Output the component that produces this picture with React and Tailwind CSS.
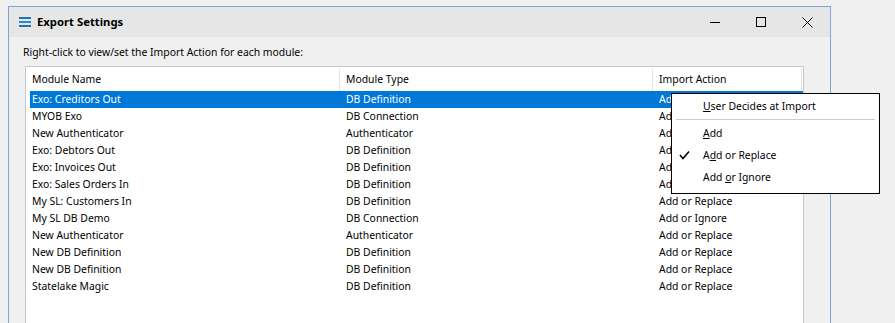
import React from 'react';

const rows = [
    ["Exo: Creditors Out", "DB Definition", "Add or Replace"],
    ["MYOB Exo", "DB Connection", "Add or Replace"],
    ["New Authenticator", "Authenticator", "Add or Replace"],
    ["Exo: Debtors Out", "DB Definition", "Add or Replace"],
    ["Exo: Invoices Out", "DB Definition", "Add or Replace"],
    ["Exo: Sales Orders In", "DB Definition", "Add or Replace"],
    ["My SL: Customers In", "DB Definition", "Add or Replace"],
    ["My SL DB Demo", "DB Connection", "Add or Ignore"],
    ["New Authenticator", "Authenticator", "Add or Replace"],
    ["New DB Definition", "DB Definition", "Add or Replace"],
    ["New DB Definition", "DB Definition", "Add or Replace"],
    ["Statelake Magic", "DB Definition", "Add or Replace"],
];

const MenuItem = ({ checked, children }) => (
    <div className="h-[22px] flex items-center relative">
        {checked && (
            <svg className="absolute left-[7px] top-[6px]" width="11" height="10" viewBox="0 0 11 10">
                <path d="M1 5 L4 8.5 L10 1.5" stroke="#000" strokeWidth="1.6" fill="none" />
            </svg>
        )}
        <span className="pl-[31px] pt-px">{children}</span>
    </div>
);

const App = () => {
    return (
        <div
            className="w-[895px] h-[323px] bg-[#f0f0f0] overflow-hidden pt-[6px] pl-[8px] relative text-[10.4px] text-black"
            style={{ fontFamily: '"Noto Sans", "Open Sans", sans-serif' }}
        >
            <div className="w-[823px] h-[330px] border-t border-l border-r border-[#7ea3d7] bg-[#f0f0f0]">
                {/* title bar */}
                <div className="h-[30px] bg-[#e6e6e6] flex items-center">
                    <svg className="ml-[10px]" width="12" height="10" viewBox="0 0 12 10">
                        <rect x="0" y="0" width="12" height="2" fill="#1e73be" />
                        <rect x="0" y="4" width="12" height="2" fill="#2a8ad6" />
                        <rect x="0" y="8" width="12" height="2" fill="#1e73be" />
                    </svg>
                    <span className="ml-[6px] font-bold text-[11.3px]">Export Settings</span>
                    <div className="ml-auto flex items-center h-full">
                        <div className="w-[46px] h-full flex items-center justify-center">
                            <svg width="10" height="10" viewBox="0 0 10 10">
                                <path d="M0 5.5 H10" stroke="#000" strokeWidth="1" />
                            </svg>
                        </div>
                        <div className="w-[46px] h-full flex items-center justify-center">
                            <svg width="10" height="10" viewBox="0 0 10 10">
                                <rect x="0.5" y="0.5" width="9" height="9" stroke="#000" strokeWidth="1" fill="none" />
                            </svg>
                        </div>
                        <div className="w-[46px] h-full flex items-center justify-center">
                            <svg width="11" height="11" viewBox="0 0 11 11">
                                <path d="M0.5 0.5 L10.5 10.5 M10.5 0.5 L0.5 10.5" stroke="#000" strokeWidth="1" />
                            </svg>
                        </div>
                    </div>
                </div>

                {/* body */}
                <div className="pl-[14px] pt-[7px]">
                    <div className="h-[16px] leading-[16px]">Right-click to view/set the Import Action for each module:</div>
                    <div className="mt-[6px] ml-[2px] w-[779px] h-[300px] border border-[#c8c8c8] bg-white">
                        <div className="flex h-[24px] items-center pt-[2px]">
                            <div className="w-[314px] h-full pl-[6px] flex items-center border-r border-[#e5e5e5]">Module Name</div>
                            <div className="w-[313px] h-full pl-[6px] flex items-center border-r border-[#e5e5e5]">Module Type</div>
                            <div className="w-[149px] h-full pl-[6px] flex items-center border-r border-[#e5e5e5]">Import Action</div>
                        </div>
                        <div className="ml-[4px]">
                            {rows.map((r, i) => (
                                <div
                                    key={i}
                                    className={`flex h-[17px] items-center pt-px ${i === 0 ? "bg-[#0078d7] text-white" : ""}`}
                                >
                                    <div className="w-[310px] pl-[2px]">{r[0]}</div>
                                    <div className="w-[313px] pl-[6px]">{r[1]}</div>
                                    <div className="pl-[6px]">{r[2]}</div>
                                </div>
                            ))}
                        </div>
                    </div>
                </div>
            </div>

            {/* context menu */}
            <div className="absolute left-[671px] top-[93px] w-[209px] h-[101px] bg-white border border-black pt-[1px]">
                <MenuItem><u>U</u>ser Decides at Import</MenuItem>
                <div className="h-[5px] flex items-center px-[4px]">
                    <div className="w-full h-px bg-[#cfcfcf]" />
                </div>
                <MenuItem><u>A</u>dd</MenuItem>
                <MenuItem checked>A<u>d</u>d or Replace</MenuItem>
                <MenuItem>Add <u>o</u>r Ignore</MenuItem>
            </div>
        </div>
    );
};

export default App;
